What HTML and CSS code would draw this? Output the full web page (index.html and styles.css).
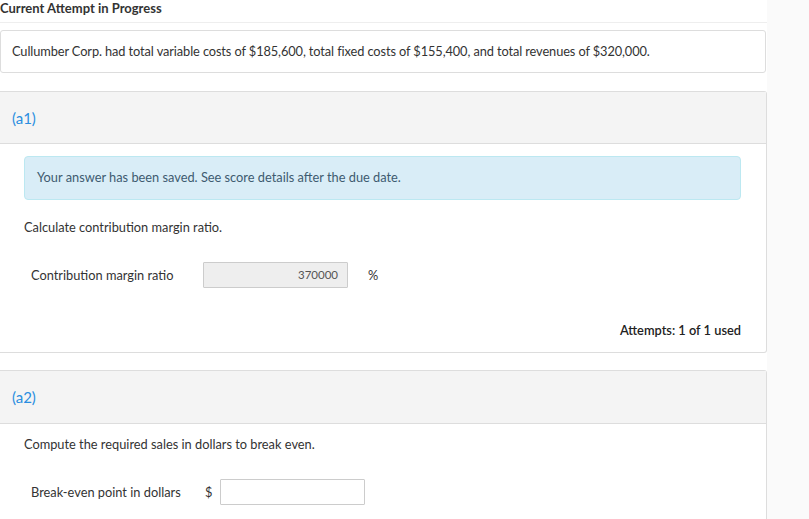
FILE: index.html
```html
<!DOCTYPE html>
<html>
<head>
<meta charset="utf-8">
<link rel="stylesheet" href="styles.css">
</head>
<body>
<div class="page">
  <main class="main">
    <div class="title">Current Attempt in Progress</div>
    <div class="problem">Cullumber Corp. had total variable costs of $185,600, total fixed costs of $155,400, and total revenues of $320,000.</div>

    <section class="panel">
      <div class="panel-head">(a1)</div>
      <div class="panel-body">
        <div class="alert">Your answer has been saved. See score details after the due date.</div>
        <p class="q">Calculate contribution margin ratio.</p>
        <div class="row">
          <span class="label">Contribution margin ratio</span>
          <span class="input disabled">370000</span>
          <span class="unit">%</span>
        </div>
        <div class="attempts">Attempts: 1 of 1 used</div>
      </div>
    </section>

    <section class="panel">
      <div class="panel-head">(a2)</div>
      <div class="panel-body body2">
        <p class="q q2">Compute the required sales in dollars to break even.</p>
        <div class="row">
          <span class="label">Break-even point in dollars</span>
          <span class="prefix">$</span>
          <span class="input"></span>
        </div>
      </div>
    </section>
  </main>
  <aside class="side"></aside>
</div>
</body>
</html>
```

FILE: styles.css
```css
html, body {
  margin: 0;
  padding: 0;
  height: 100%;
  overflow: hidden;
}
body {
  font-family: Lato, "Open Sans", "Liberation Sans", sans-serif;
  font-size: 12.8px;
  color: #333;
  background: #fff;
}
.page {
  display: flex;
  height: 100%;
}
.main {
  width: 767px;
  flex: none;
  overflow: hidden;
}
.side {
  flex: 1;
  background: #fafafa;
}
.title {
  font-weight: bold;
  font-size: 13px;
  line-height: 16px;
  height: 22px;
  border-bottom: 1px solid #eee;
}
.problem {
  margin-top: 7px;
  border: 1px solid #ddd;
  border-radius: 3px;
  padding: 12px 11px 13px;
  line-height: 16px;
  width: 742px;
  letter-spacing: -0.1px;
}
.panel {
  margin-top: 18px;
  border: 1px solid #ddd;
  border-left: none;
  border-radius: 0 3px 3px 0;
  width: 766px;
}
.panel-head {
  background: #f4f4f4;
  border-bottom: 1px solid #ddd;
  height: 52px;
  box-sizing: border-box;
  padding: 17px 12px 0;
  font-size: 15px;
  line-height: 18px;
  color: #2a8ee0;
}
.panel + .panel {
  margin-top: 17px;
}
.panel + .panel .panel-head {
  height: 53px;
  padding-top: 17px;
}
.panel-body {
  padding: 12px 25px 14px 24px;
}
.alert {
  background: #d9edf7;
  border: 1px solid #bce8f1;
  border-radius: 4px;
  padding: 12px 12px 14px;
  line-height: 16px;
  color: #3e5b70;
}
.q {
  margin: 19px 0 0;
  line-height: 16px;
}
.q2 {
  margin-top: 0;
}
.body2 {
  padding-bottom: 16px;
}
.row {
  display: flex;
  align-items: center;
  margin-top: 27px;
  padding-left: 7px;
  height: 26px;
}
.label {
  width: 172px;
  flex: none;
}
.input {
  width: 145px;
  height: 26px;
  box-sizing: border-box;
  border: 1px solid #ccc;
  border-radius: 1px;
  background: #fff;
  font-size: 11.5px;
  color: #555;
  text-align: right;
  line-height: 24px;
  padding-right: 9px;
}
.input.disabled {
  background: #eee;
}
.unit {
  margin-left: 20px;
}
.prefix {
  margin-left: 2px;
  width: 15px;
}
.attempts {
  margin-top: 34px;
  text-align: right;
  line-height: 16px;
  font-weight: 600;
  color: #222;
}
```
